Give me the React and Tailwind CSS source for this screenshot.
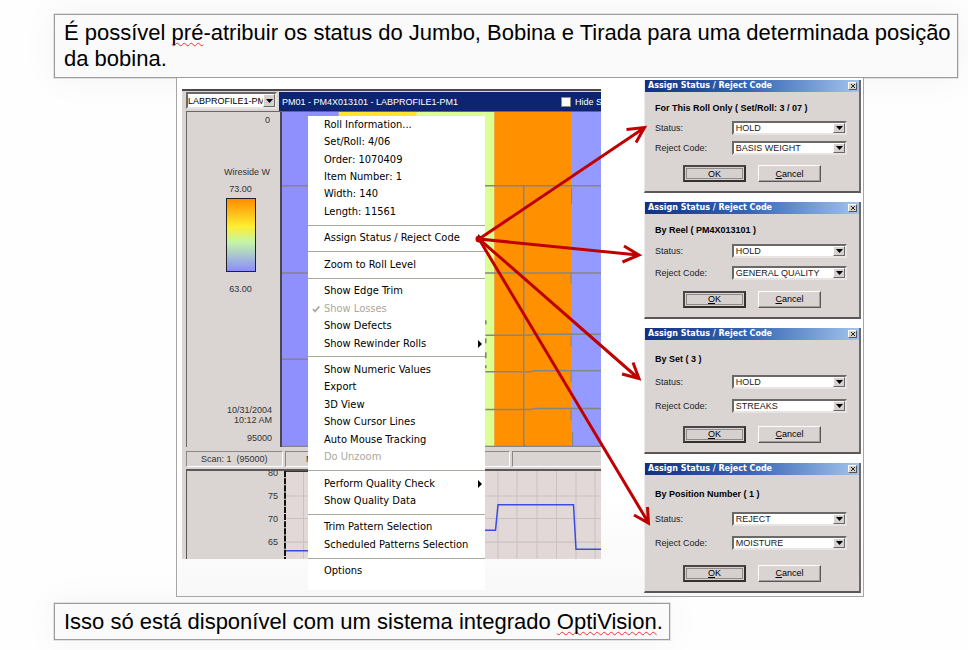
import React from "react";

const DIALOGS = [
  { id: "roll", heading: "For This Roll Only ( Set/Roll: 3 / 07 )", status: "HOLD", code: "BASIS WEIGHT", frame: "h-[113px]", body: "pt-[9px]" },
  { id: "reel", heading: "By Reel ( PM4X013101 )", status: "HOLD", code: "GENERAL QUALITY", frame: "h-[117px]", body: "pt-[9px]" },
  { id: "set", heading: "By Set ( 3 )", status: "HOLD", code: "STREAKS", frame: "h-[126px]", body: "pt-3" },
  { id: "position", heading: "By Position Number ( 1 )", status: "REJECT", code: "MOISTURE", frame: "h-[130px]", body: "pt-3" },
];

const MENU = [
  [
    { label: "Roll Information..." },
    { label: "Set/Roll: 4/06" },
    { label: "Order: 1070409" },
    { label: "Item Number: 1" },
    { label: "Width: 140" },
    { label: "Length: 11561" },
  ],
  [{ label: "Assign Status / Reject Code", sub: true }],
  [{ label: "Zoom to Roll Level" }],
  [
    { label: "Show Edge Trim" },
    { label: "Show Losses", disabled: true, checked: true },
    { label: "Show Defects" },
    { label: "Show Rewinder Rolls", sub: true },
  ],
  [
    { label: "Show Numeric Values" },
    { label: "Export" },
    { label: "3D View" },
    { label: "Show Cursor Lines" },
    { label: "Auto Mouse Tracking" },
    { label: "Do Unzoom", disabled: true },
  ],
  [{ label: "Perform Quality Check", sub: true }, { label: "Show Quality Data" }],
  [{ label: "Trim Pattern Selection" }, { label: "Scheduled Patterns Selection" }],
  [{ label: "Options" }],
];

function Misspelt({ children }) {
  return (
    <span className="underline decoration-red-500 decoration-wavy decoration-1 underline-offset-2 [text-decoration-skip-ink:none]">
      {children}
    </span>
  );
}

function Note({ children, className }) {
  return (
    <p
      className={`border border-[#9c9c9c] bg-[#fafafa] pt-[5px] pr-[6px] pl-[9px] text-[22px] leading-[26px] text-black shadow-[0_0_0_1px_#e2e2e2,0_0_36px_rgba(0,0,0,0.05)] ${className}`}
    >
      {children}
    </p>
  );
}

function DropArrow() {
  return (
    <span className="pointer-events-none absolute inset-y-[2px] right-[2px] flex w-3 items-center justify-center border border-t-white border-r-[#6b6868] border-b-[#6b6868] border-l-white bg-[#d6d0cf]">
      <svg viewBox="0 0 7 4" className="h-1 w-[7px]" aria-hidden="true">
        <path d="M0 0h7L3.5 4z" fill="#000" />
      </svg>
    </span>
  );
}

function Field({ id, label, value }) {
  return (
    <div className="flex items-center">
      <label htmlFor={id} className="w-[78px] text-[9px] leading-3 text-[#222]">
        {label}
      </label>
      <div className="relative h-[14px] w-[117px]">
        <select
          id={id}
          className="block h-full w-full appearance-none rounded-none border-2 border-t-[#6b6868] border-r-[#e8e4e4] border-b-[#e8e4e4] border-l-[#6b6868] bg-white pl-[2px] text-[9px] leading-[10px] text-[#222]"
        >
          <option>{value}</option>
        </select>
        <DropArrow />
      </div>
    </div>
  );
}

function Dialog({ id, heading, status, code, frame, body }) {
  return (
    <section
      className={`flex flex-col border-r-2 border-b-2 border-l border-r-[#6d686b] border-b-[#5c5659] border-l-[#eeeaea] bg-[#dad4d3] ${frame}`}
    >
      <header className="flex h-3 items-center justify-between bg-linear-to-r from-[#12307f] via-[#3a68b4] to-[#a3c4ec] pr-[2px] pl-[3px]">
        <h2 className="font-['DejaVu_Sans',sans-serif] text-[8px] leading-3 font-bold text-white">Assign Status / Reject Code</h2>
        <button type="button" aria-label="Close" className="flex h-2 w-[9px] items-center justify-center border border-t-white border-r-[#555] border-b-[#555] border-l-white bg-[#d6d0cf]">
          <svg viewBox="0 0 6 6" className="h-[6px] w-[6px]" aria-hidden="true">
            <path d="M1 1l4 4M5 1L1 5" stroke="#222" fill="none" />
          </svg>
        </button>
      </header>
      <div className={`flex flex-1 flex-col justify-between pr-3 pb-[9px] pl-[10px] ${body}`}>
        <h3 className="text-[9px] leading-[14px] font-bold whitespace-pre text-black">{heading}</h3>
        <Field id={`${id}-status`} label="Status:" value={status} />
        <Field id={`${id}-code`} label="Reject Code:" value={code} />
        <div className="mt-1 flex gap-3 pl-7">
          <button
            type="button"
            className="flex h-[17px] w-[63px] items-center justify-center border-2 border-t-[#4a4648] border-r-[#33302f] border-b-[#33302f] border-l-[#4a4648] bg-[#d6d0cf] text-[9px] leading-3 text-black outline outline-1 -outline-offset-4 outline-[#8f8989]"
          >
            <span>
              <u>O</u>K
            </span>
          </button>
          <button
            type="button"
            className="flex h-[17px] w-[63px] items-center justify-center border border-t-white border-r-[#5a5558] border-b-[#5a5558] border-l-white bg-[#d9d3d2] text-[9px] leading-3 text-black shadow-[inset_-1px_-1px_0_#a39d9d]"
          >
            <span>
              <u>C</u>ancel
            </span>
          </button>
        </div>
      </div>
    </section>
  );
}

function MenuItem({ label, sub, disabled, checked }) {
  return (
    <li className="flex flex-1">
      <button
        type="button"
        disabled={disabled}
        className="flex w-full items-center pr-[3px] text-left text-[11px] leading-4 whitespace-nowrap text-black disabled:text-[#aca899]"
      >
        <span className="flex w-4 justify-center">
          {checked && (
            <svg viewBox="0 0 8 8" className="h-2 w-2" aria-hidden="true">
              <path d="M1 4l2 2.4L7.400 1.400" fill="none" stroke="#aca899" strokeWidth="1.800" />
            </svg>
          )}
        </span>
        <span className="flex-1">{label}</span>
        {sub && (
          <svg viewBox="0 0 4 8" className="h-2 w-1" aria-hidden="true">
            <path d="M0 0l4 4-4 4z" fill="#000" />
          </svg>
        )}
      </button>
    </li>
  );
}

function ContextMenu() {
  return (
    <ul className="absolute top-[38px] left-[131px] flex h-[474px] w-[177px] flex-col bg-white pb-[10px] font-['DejaVu_Sans_Condensed','DejaVu_Sans',sans-serif]">
      {MENU.map((group, i) => (
        <React.Fragment key={i}>
          {i > 0 && (
            <li className="flex h-[9px] items-center" role="separator">
              <span className="h-px w-full bg-[#aca899]" />
            </li>
          )}
          {group.map((item) => (
            <MenuItem key={item.label} {...item} />
          ))}
        </React.Fragment>
      ))}
    </ul>
  );
}

function RollMap() {
  return (
    <svg viewBox="281 111 320 336" preserveAspectRatio="none" className="h-full w-full" aria-label="Roll map">
      <rect x="281" y="111" width="57" height="336" fill="#8f8ffd" />
      <rect x="338" y="111" width="78" height="336" fill="#ffe52b" />
      <rect x="416" y="111" width="78" height="336" fill="#dcff93" />
      <rect x="494" y="111" width="78" height="336" fill="#ff9100" />
      <rect x="571" y="111" width="30" height="336" fill="#949aff" />
      <g stroke="#858585" strokeWidth="1.500" fill="none">
        <path d="M281 185H601M281 272.500H601M281 359H310M485 335H530l4-1H601M485 371.500H530l4-1H601M485 409.500H530l4-1H601M523.500 185V445l2 1" />
        <path d="M571.500 187v16M571 273v10M571 336v10M571 372v10M571 410v10M572.500 432v14" strokeWidth="1" />
        <path d="M281 446.500H601" />
      </g>
      <path d="M485.500 320v4M485.500 338v5M485.500 352v6M485.500 365v3" stroke="#444" />
    </svg>
  );
}

function TrendPlot() {
  return (
    <svg viewBox="284 473 317 86" preserveAspectRatio="none" className="h-full w-full" aria-label="Profile trend">
      <rect x="284" y="473" width="317" height="86" fill="#e2d8d7" />
      <path
        d="M303.500 473v86M322.500 473v86M498 473v86M517 473v86M537 473v86M556.500 473v86M576 473v86M595 473v86M284 497.500H601M284 519.500H601M284 542.500H601"
        stroke="#cac1c0"
        fill="none"
      />
      <path d="M284 473.500H310" stroke="#333" />
      <path d="M285 473V559" stroke="#111" strokeWidth="2" strokeDasharray="6 1" />
      <path d="M286 551H340V531H495.500L498 506H573.500L576 549.500H601" stroke="#3c4be0" strokeWidth="1.500" fill="none" />
    </svg>
  );
}

function ProfileWindow() {
  return (
    <div className="mt-[11px] ml-[5px] flex h-[470px] w-[419px] flex-col border-t-2 border-[#4b474b] bg-[#dad4d3] pl-1">
      <div className="flex h-5 pt-px">
        <div className="relative h-[17px] w-[91px]">
          <select
            aria-label="Profile"
            className="block h-full w-full appearance-none rounded-none border-2 border-t-[#6b6868] border-r-[#e8e4e4] border-b-[#e8e4e4] border-l-[#6b6868] bg-white text-[9px] leading-3 text-black"
          >
            <option>LABPROFILE1-PM1</option>
          </select>
          <DropArrow />
        </div>
        <div className="ml-[2px] flex flex-1 items-center justify-between overflow-hidden bg-[#0c2472] pl-[3px] text-white">
          <h1 className="text-[9px] leading-3 whitespace-nowrap">PM01 - PM4X013101 - LABPROFILE1-PM1</h1>
          <label className="flex w-10 items-center gap-1 overflow-hidden text-[9px] leading-3 whitespace-nowrap">
            <input type="checkbox" className="h-[10px] w-[10px] shrink-0 appearance-none border border-[#888] bg-white" />
            Hide Scan
          </label>
        </div>
      </div>
      <div className="flex h-[336px] border-t border-l border-[#6b6668] text-[9px] leading-[10px] text-[#333]">
        <div className="flex w-[95px] flex-col border-r-2 border-[#4b474b] pt-[3px] pb-1">
          <span className="pr-[10px] text-right">0</span>
          <span className="mt-[42px] pr-[10px] text-right">Wireside W</span>
          <div className="mt-[7px] flex w-full flex-col items-center pl-[14px]">
            <span>73.00</span>
            <span className="mt-1 mb-3 h-[74px] w-[30px] border border-[#222] bg-linear-to-b from-[#ff8c00] to-[#8a8cff] [--tw-gradient-via-stops:#ff8c00,#ffee30_38%,#c4f5a8_60%,#8a8cff]" />
            <span>63.00</span>
          </div>
          <span className="mt-auto pr-2 text-right">
            10/31/2004
            <br />
            10:12 AM
          </span>
          <span className="mt-2 pr-2 text-right">95000</span>
        </div>
        <div className="flex-1">
          <RollMap />
        </div>
      </div>
      <div className="mt-1 flex h-4 gap-[2px] text-[9px] leading-[14px] text-[#333]">
        <span className="w-[97px] border border-t-[#8c8688] border-r-white border-b-white border-l-[#8c8688] pl-[14px] whitespace-pre">Scan: 1  (95000)</span>
        <span className="w-[225px] border border-t-[#8c8688] border-r-white border-b-white border-l-[#8c8688] pl-5">MD</span>
        <span className="flex-1 border border-t-[#8c8688] border-b-white border-l-[#8c8688] border-r-transparent" />
      </div>
      <div className="mt-[2px] flex min-h-0 flex-1 border-t-2 border-l border-[#5c5759]">
        <div className="flex w-[97px] flex-col gap-[13px] overflow-hidden pr-[6px] text-right text-[9px] leading-[10px] text-[#333]">
          <span className="-mt-[3px]">80</span>
          <span>75</span>
          <span>70</span>
          <span>65</span>
        </div>
        <div className="flex-1">
          <TrendPlot />
        </div>
      </div>
    </div>
  );
}

function Arrows() {
  return (
    <svg viewBox="176 78 688 519" className="pointer-events-none absolute top-0 -left-px h-[519px] w-[688px]" aria-hidden="true">
      <g stroke="#c00000" strokeWidth="3" fill="none">
        <path d="M479 239L644 128M626.500 129.500L644.500 127.500L636 142.500" />
        <path d="M479 239L638 255M624 246L639 255L622.500 262" />
        <path d="M479 239L638 378M633 362.500L639 378.500L622 374" />
        <path d="M479 239L648 522M647.500 507L648.500 523L634 515" />
      </g>
      <circle cx="479" cy="239" r="3.500" fill="#c00000" />
    </svg>
  );
}

export default function App() {
  return (
    <main className="flex min-h-screen flex-col items-start bg-[#fefefe] pt-[14px] pr-[10px] pl-[54px] font-['Liberation_Sans',Arial,sans-serif]">
      <Note className="w-full pb-[5px]">
        É possível <Misspelt>pré</Misspelt>-atribuir os status do Jumbo, Bobina e Tirada para uma determinada posição da bobina.
      </Note>
      <figure className="relative ml-[122px] flex w-[688px] items-start justify-between border border-t-0 border-[#a6a6a6] bg-linear-to-b from-white from-80% to-[#f8f8f8] pr-[2px] pb-[3px]">
        <ProfileWindow />
        <div className="flex w-[217px] flex-col gap-[9px] pt-[2px]">
          {DIALOGS.map((dialog) => (
            <Dialog key={dialog.id} {...dialog} />
          ))}
        </div>
        <ContextMenu />
        <Arrows />
      </figure>
      <Note className="mt-[6px] pb-1">
        Isso só está disponível com um sistema integrado <Misspelt>OptiVision</Misspelt>.
      </Note>
    </main>
  );
}
